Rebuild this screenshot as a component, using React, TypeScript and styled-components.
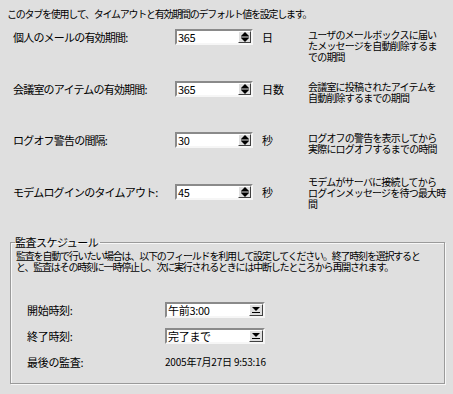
import styled, { createGlobalStyle } from 'styled-components';

const GlobalStyle = createGlobalStyle`
  html, body {
    margin: 0;
    padding: 0;
    background: #dfdfdf;
  }
  body {
    font-family: "Noto Sans CJK JP", sans-serif;
    font-size: 11px;
    color: #000;
  }
`;

interface ISetting {
  label: string;
  value: string;
  unit: string;
  desc: string[];
  shift?: number;
}

const settings: ISetting[] = [
  {
    label: '個人のメールの有効期間:',
    value: '365',
    unit: '日',
    desc: ['ユーザのメールボックスに届い', 'たメッセージを自動削除するま', 'での期間']
  },
  {
    label: '会議室のアイテムの有効期間:',
    value: '365',
    unit: '日数',
    desc: ['会議室に投稿されたアイテムを', '自動削除するまでの期間']
  },
  {
    label: 'ログオフ警告の間隔:',
    value: '30',
    unit: '秒',
    desc: ['ログオフの警告を表示してから', '実際にログオフするまでの時間']
  },
  {
    label: 'モデムログインのタイムアウト:',
    value: '45',
    unit: '秒',
    desc: ['モデムがサーバに接続してから', 'ログインメッセージを待つ最大時', '間'],
    shift: -8
  }
];

const DropArrow = () => (
  <svg width="8" height="7" viewBox="0 0 8 7">
    <path d="M0 0 L8 0 L4 4 Z" fill="#000" />
    <rect x="0" y="5" width="8" height="1" fill="#000" />
  </svg>
);

export default function App() {
  return (
    <Page>
      <GlobalStyle />
      <Intro>このタブを使用して、タイムアウトと有効期間のデフォルト値を設定します。</Intro>
      <Settings>
        {settings.map((s) => (
          <Row key={s.label}>
            <Label>{s.label}</Label>
            <Spin>
              <Value>{s.value}</Value>
              <SpinButton>
                <svg width="8" height="10" viewBox="0 0 8 10">
                  <path d="M4 0 L8 4 L0 4 Z" fill="#000" />
                  <rect x="0" y="4.5" width="8" height="1" fill="#000" />
                  <path d="M0 6 L8 6 L4 10 Z" fill="#000" />
                </svg>
              </SpinButton>
            </Spin>
            <Unit>{s.unit}</Unit>
            <Desc $shift={s.shift ?? 0}>
              {s.desc.map((line) => (
                <div key={line}>{line}</div>
              ))}
            </Desc>
          </Row>
        ))}
      </Settings>
      <Group>
        <Legend>監査スケジュール</Legend>
        <GroupText>
          <div>監査を自動で行いたい場合は、以下のフィールドを利用して設定してください。終了時刻を選択すると</div>
          <div>と、監査はその時刻に一時停止し、次に実行されるときには中断したところから再開されます。</div>
        </GroupText>
        <Schedule>
          <SchedLabel>開始時刻:</SchedLabel>
          <Select>
            <Value>午前3:00</Value>
            <DropButton>
              <DropArrow />
            </DropButton>
          </Select>
          <SchedLabel>終了時刻:</SchedLabel>
          <Select>
            <Value>完了まで</Value>
            <DropButton>
              <DropArrow />
            </DropButton>
          </Select>
          <SchedLabel>最後の監査:</SchedLabel>
          <Stamp>2005年7月27日 9:53:16</Stamp>
        </Schedule>
      </Group>
    </Page>
  );
}

const Page = styled.div`
  width: 453px;
  height: 394px;
  box-sizing: border-box;
  padding-top: 8px;
  overflow: hidden;
`;

const Intro = styled.div`
  padding-left: 7px;
  font-size: 10px;
  line-height: 12px;
  letter-spacing: -1.25px;
  white-space: nowrap;
`;

const Settings = styled.div`
  margin-top: 9px;
  display: flex;
  flex-direction: column;
`;

const Row = styled.div`
  display: grid;
  grid-template-columns: 162px 78px 55px 1fr;
  align-items: start;
  height: 51.5px;
  padding-left: 13px;
`;

const Label = styled.div`
  line-height: 16px;
  font-size: 11px;
  letter-spacing: -0.8px;
  white-space: nowrap;
`;

const Spin = styled.div`
  display: flex;
  align-items: stretch;
  height: 16px;
  box-sizing: border-box;
  background: #fff;
  border: 2px solid;
  border-color: #8a8a8a #f6f6f6 #f6f6f6 #8a8a8a;
`;

const Value = styled.div`
  flex: 1;
  padding-left: 1px;
  font-size: 11px;
  line-height: 12px;
  letter-spacing: -0.3px;
  white-space: nowrap;
`;

const SpinButton = styled.div`
  width: 13px;
  display: flex;
  align-items: center;
  justify-content: center;
  background: #dfdfdf;
  border: 1px solid;
  border-color: #fff #404040 #404040 #fff;
  box-sizing: border-box;
`;

const Unit = styled.div`
  padding-left: 9px;
  line-height: 16px;
  font-size: 11px;
`;

const Desc = styled.div<{ $shift: number }>`
  margin-top: ${(p) => p.$shift}px;
  font-size: 10px;
  line-height: 11px;
  letter-spacing: -0.8px;
  white-space: nowrap;
`;

const Group = styled.fieldset`
  margin: 1px 8px 0 10px;
  padding: 0 0 0 5px;
  height: 148px;
  box-sizing: border-box;
  border: 1px solid #9a9a9a;
  box-shadow: inset 1px 1px 0 #f7f7f7, 1px 1px 0 #f7f7f7;
`;

const Legend = styled.legend`
  padding: 0 2px 0 0;
  margin-left: -1px;
  font-size: 11px;
  line-height: 12px;
  letter-spacing: -0.5px;
`;

const GroupText = styled.div`
  margin-top: 3px;
  font-size: 10px;
  line-height: 10.5px;
  letter-spacing: -1.2px;
  white-space: nowrap;
`;

const Schedule = styled.div`
  margin-top: 30px;
  padding-left: 11px;
  display: grid;
  grid-template-columns: 138px 100px;
  grid-auto-rows: 16px;
  row-gap: 10px;
  align-items: center;
`;

const SchedLabel = styled.div`
  font-size: 11px;
  line-height: 16px;
  letter-spacing: -0.3px;
`;

const Select = styled(Spin)``;

const DropButton = styled(SpinButton)`
  width: 14px;
`;

const Stamp = styled.div`
  font-size: 10px;
  line-height: 16px;
  letter-spacing: -0.2px;
  white-space: nowrap;
`;
